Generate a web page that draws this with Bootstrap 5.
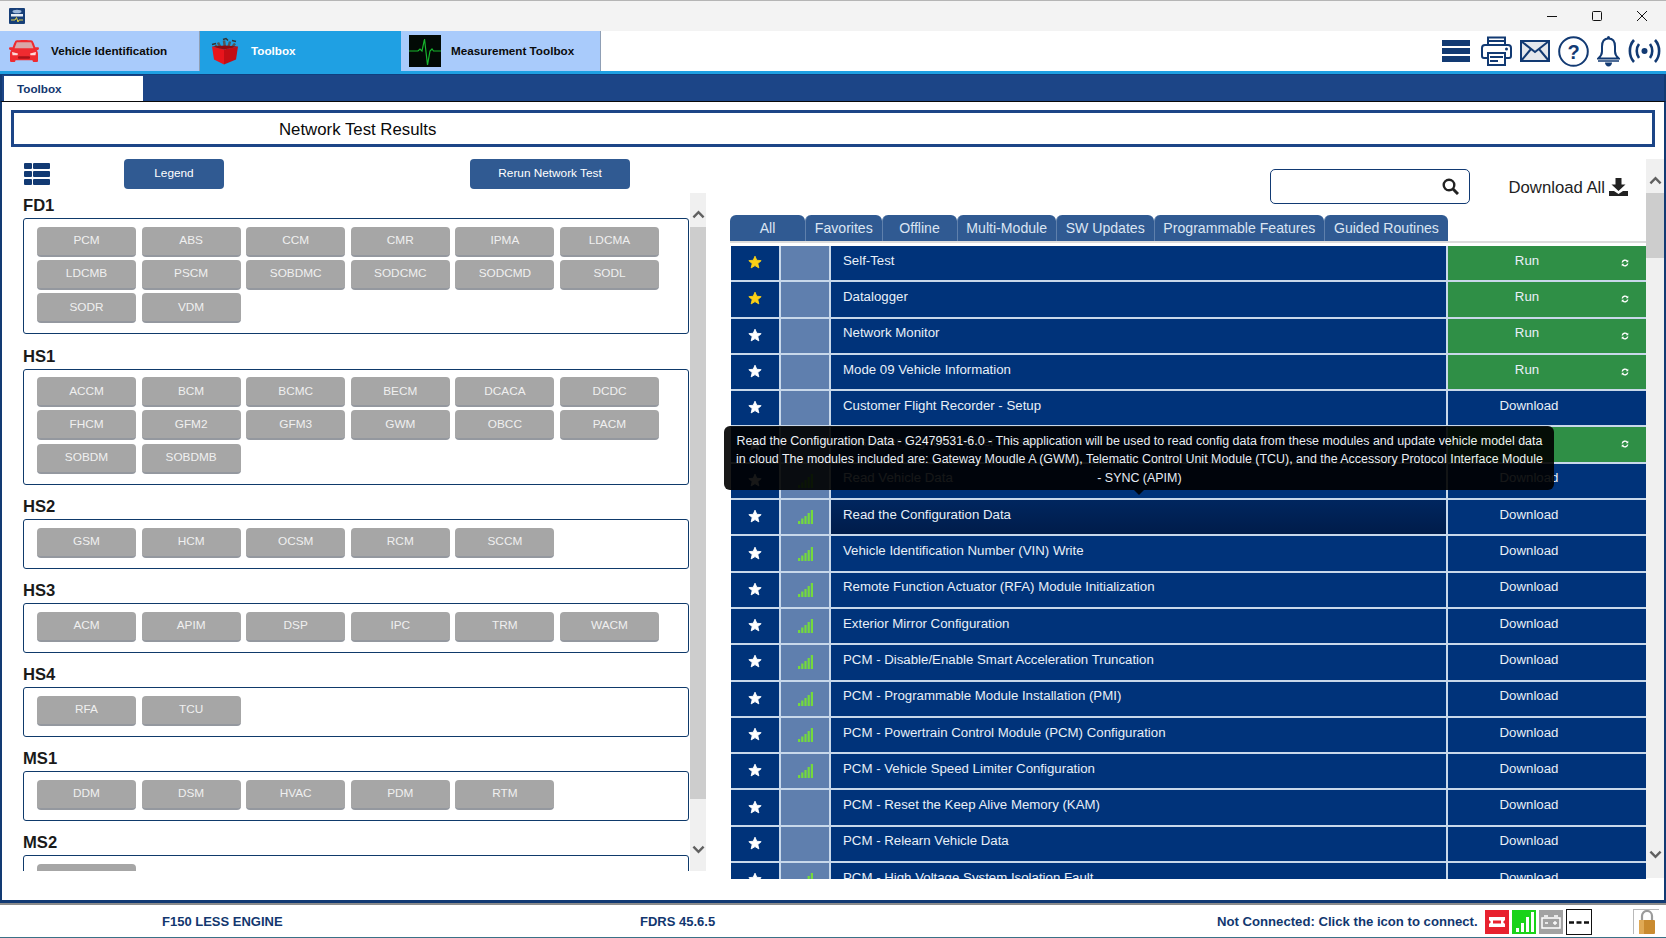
<!DOCTYPE html>
<html lang="en">

<head>
    <meta charset="UTF-8">
    <meta name="viewport" content="width=device-width, initial-scale=1.0">
    <title>FDRS - Toolbox</title>
    <link href="https://cdn.jsdelivr.net/npm/bootstrap@5.3.0/dist/css/bootstrap.min.css" rel="stylesheet">
    <style>
        html, body { height: 100%; }
        body {
            margin: 0;
            overflow: hidden;
            background: #fff;
            font-family: "Liberation Sans", Arial, sans-serif;
            color: #111;
        }
        .fd-app { width: 1666px; height: 938px; }

        /* window title bar */
        .fd-titlebar { height: 31px; background: #f3f3f3; border-top: 1px solid #b5b5b5; }
        .fd-applogo { margin-left: 9px; }
        .fd-winbtns { gap: 35px; padding-right: 19px; }

        /* main ribbon */
        .fd-ribbon { height: 40px; background: #fff; }
        .fd-mtab {
            width: 200px;
            background: #a9cbfb;
            color: #0b0b0b;
            font-size: 11.7px;
            font-weight: 700;
            border-right: 1px solid #8f9fb5;
        }
        .fd-mtab.fd-on { background: #1fa0e3; color: #fff; border-right: 0; width: 201px; }
        .fd-mtab-ico { width: 51px; flex: none; }
        .fd-mtab-car { padding-right: 11px; }
        .fd-mtab.fd-on .fd-mtab-ico { width: 41px; padding-left: 10px; }
        .fd-mtab.fd-on .fd-mtab-lbl { margin-left: 10px; }
        .fd-mtab.fd-third .fd-mtab-ico { width: 50px; padding-left: 8px; }
        .fd-tools { margin-left: auto; padding-right: 5px; }
        .fd-burger { margin-right: 5px; }
        .fd-strip { height: 4px; background: #1fa0e3; border-bottom: 1px solid #0f3f7f; }

        /* sub tab row */
        .fd-subbar {
            height: 27px;
            background: #1c4587;
            border-bottom: 1px solid #0a0a0a;
            padding-left: 2px;
            border-left: 2px solid #123a73;
            border-right: 2px solid #123a73;
        }
        .fd-subtab {
            width: 139px;
            height: 25px;
            margin-top: 1px;
            padding-left: 13px;
            background: #fff;
            color: #12376f;
            font-size: 11.7px;
            font-weight: 700;
            line-height: 25px;
        }

        /* page body */
        .fd-page {
            height: 801px;
            border-left: 2px solid #123a73;
            border-right: 2px solid #123a73;
            border-bottom: 3px solid #123a73;
        }
        .fd-heading {
            height: 37px;
            margin: 8px 9px 0 9px;
            padding-left: 265px;
            border: 3px solid #1c4587;
            font-size: 16.8px;
            line-height: 33px;
            color: #0a0a0a;
        }
        .fd-left { width: 729px; padding: 12px 0 0 21px; flex: none; }
        .fd-actionbtn {
            height: 30px;
            padding: 0 0 2px 0;
            background: #305a92;
            border: 0;
            border-radius: 4px;
            color: #fff;
            font-size: 11.8px;
            line-height: 28px;
        }
        .fd-legend { width: 100px; margin-left: 73px; }
        .fd-rerun { width: 160px; margin-left: 246px; }
        .fd-modwrap { height: 678px; margin-top: 4px; }
        .fd-modlist { width: 666px; overflow: hidden; }
        .fd-bus { font-size: 16.6px; font-weight: 700; line-height: 25px; height: 25px; color: #1a1a1a; }
        .fd-busbox {
            margin-bottom: 9.5px;
            padding: 7.5px 12px 10px 13px;
            border: 1px solid #0f3a6b;
            border-radius: 3px;
            display: grid;
            grid-template-columns: repeat(6, 99px);
            column-gap: 5.6px;
            row-gap: 3.3px;
        }
        .fd-mod {
            height: 30px;
            padding: 0;
            background: #a6a6a6;
            border: 0;
            border-bottom: 2px solid #94989f;
            border-radius: 4px;
            color: #f0f0f0;
            font-size: 11.8px;
            line-height: 27px;
        }

        /* fake scrollbars */
        .fd-sbar { background: #f0f0f0; flex: none; }
        .fd-sbar-a { width: 16px; margin-left: 1px; }
        .fd-sbar-b { width: 18px; }
        .fd-sbar-end { height: 34px; flex: none; }
        .fd-sbar-a .fd-sbar-end:first-child { padding-top: 8px; }
        .fd-sbar-a .fd-sbar-end:last-child { padding-bottom: 10px; }
        .fd-sbar-b .fd-sbar-end:last-child { padding-bottom: 14px; }
        .fd-thumb { background: #cdcdcd; flex: none; }
        .fd-thumb-a { height: 572px; }
        .fd-thumb-b { height: 65px; }

        /* right side */
        .fd-right { width: 933px; flex: none; height: 719px; margin-top: 12px; }
        .fd-rmain { width: 915px; position: relative; }
        .fd-toprow { height: 35px; margin-top: 10px; margin-bottom: 11px; padding-right: 18px; }
        .fd-search {
            width: 200px;
            height: 35px;
            border: 1px solid #123a73;
            border-radius: 5px;
            padding-right: 10px;
        }
        .fd-search input { border: 0; background: transparent; box-shadow: none; }
        .fd-dlall { margin-left: 39px; font-size: 16.7px; color: #222; padding-top: 2px; }
        .fd-tabs { margin-left: -1px; border-bottom: 2px solid #dcdcdc; height: 28px; flex-wrap: nowrap; }
        .fd-tabs .nav-link {
            min-width: 75px;
            height: 26px;
            padding: 0 8.8px;
            background: #305a92;
            color: #dbe5f2;
            font-size: 14.1px;
            line-height: 26px;
            text-align: center;
            border: 0;
            border-left: 1px solid #5f80ac;
            border-radius: 6px 6px 0 0;
        }
        .fd-tabs .nav-item:first-child .nav-link { border-left: 0; }
        .fd-rows {
            height: 633px;
            margin-top: 3px;
            overflow: hidden;
            background: #c8d8ea;
            display: flex;
            flex-direction: column;
            gap: 2px;
        }
        .fd-row { height: 34.3px; flex: none; gap: 2px; color: #e9f0f8; font-size: 13.25px; }
        .fd-cstar { width: 48px; background: #00337a; padding-bottom: 2px; }
        .fd-gold { color: #fcd116; }
        .fd-csig { width: 48px; background: #5f7fae; }
        .fd-cname { width: 615px; background: #00337a; padding: 0 0 5px 12px; }
        .fd-cact { width: 198px; background: #00337a; padding: 0 36px 5px 0; position: relative; }
        .fd-cact.fd-run { background: #2f8f46; padding-right: 40px; }
        .fd-refresh { position: absolute; right: 17px; top: 13px; }
        .fd-row.fd-hover .fd-cname { background: linear-gradient(#00265f, #001c4a); }

        /* tooltip over the rows */
        .fd-tip { position: absolute; top: 260.5px; left: -13px; margin: 0; }
        .fd-tip .tooltip-inner {
            width: 830px;
            max-width: 830px;
            height: 64px;
            padding: 6px 4px;
            font-size: 12.45px;
            line-height: 18.6px;
            background: #000;
            font-family: "Liberation Sans", Arial, sans-serif;
        }
        .fd-tip .tooltip-arrow { position: absolute; left: 415px; }

        /* status bar */
        .fd-status {
            height: 35px;
            padding-top: 1px;
            background: #fff;
            border-top: 2px solid #8b8b8b;
            border-bottom: 1px solid #3a7187;
            color: #12376f;
            font-size: 13px;
            font-weight: 700;
        }
        .fd-veh { margin-left: 162px; width: 478px; }
        .fd-ver { width: 577px; }
        .fd-conn { width: 268px; font-size: 13.15px; white-space: nowrap; }
        .fd-lights { gap: 3px; }
        .fd-lockbox { margin-left: 41px; width: 26px; height: 25px; border: 1px solid #b9b9b9; border-right: 0; border-bottom: 0; }
    </style>
</head>

<body>
    <svg width="0" height="0" class="position-absolute">
        <symbol id="ico-star" viewBox="0 0 24 24"><path d="M12 2l3 7 7.6.7-5.8 5 1.8 7.4L12 18.200l-6.600 3.900 1.800-7.400-5.800-5L9 9z" stroke="currentColor" stroke-width="1.500" stroke-linejoin="round" fill="currentColor"/></symbol>
        <symbol id="ico-bars" viewBox="0 0 15 14" fill="#74da3c"><rect x="0" y="11" width="2.200" height="3"/><rect x="3.200" y="8.500" width="2.200" height="5.500"/><rect x="6.400" y="6" width="2.200" height="8"/><rect x="9.600" y="3" width="2.200" height="11"/><rect x="12.800" y="0" width="2.200" height="14"/></symbol>
        <symbol id="ico-refresh" viewBox="0 0 16 16"><path d="M2.500 7a5.600 5.600 0 0 1 9.800-2.700M13.500 9a5.600 5.600 0 0 1-9.800 2.700" fill="none" stroke="#fff" stroke-width="2.800"/><path d="M14.500 1.500v5h-5zM1.500 14.500v-5h5z" fill="#fff"/></symbol>
        <symbol id="ico-up" viewBox="0 0 14 9"><path d="M1.500 7.500L7 2l5.500 5.500" fill="none" stroke="#606060" stroke-width="2.600"/></symbol>
        <symbol id="ico-down" viewBox="0 0 14 9"><path d="M1.500 1.500L7 7l5.500-5.500" fill="none" stroke="#606060" stroke-width="2.600"/></symbol>
    </svg>

    <div class="fd-app d-flex flex-column">

        <div class="fd-titlebar d-flex align-items-center justify-content-between">
            <svg class="fd-applogo" width="16" height="16" viewBox="0 0 16 16">
                <rect width="16" height="16" rx="1" fill="#173f78"/>
                <ellipse cx="8" cy="3.500" rx="4.500" ry="1.800" fill="#9db8dc"/>
                <rect x="2" y="6" width="12" height="2.500" fill="#e8eef6"/>
                <path d="M2 12h4l1.500-2.500L9 14l1-2h4" fill="none" stroke="#e6d34a" stroke-width="1"/>
            </svg>
            <div class="fd-winbtns d-flex align-items-center">
                <svg width="10" height="10" viewBox="0 0 10 10"><path d="M0 5.500h10" stroke="#111" stroke-width="1"/></svg>
                <svg width="10" height="10" viewBox="0 0 10 10"><rect x=".5" y=".5" width="9" height="9" rx="1" fill="none" stroke="#111" stroke-width="1"/></svg>
                <svg width="10" height="10" viewBox="0 0 10 10"><path d="M0 0l10 10M10 0L0 10" stroke="#111" stroke-width="1"/></svg>
            </div>
        </div>

        <div class="fd-ribbon d-flex">
            <div class="fd-mtab d-flex align-items-center">
                <div class="fd-mtab-ico fd-mtab-car d-flex justify-content-end">
                    <svg width="32" height="24" viewBox="0 0 32 23" preserveAspectRatio="none">
                        <path d="M8 1.500C10 .8 22 .8 24 1.500c1 .4 2.500 4 3.300 6.500H30c1.200 0 1.500 2.200 0 2.500l-1.300.3c.8 1 1.300 2 1.300 3.700v6c0 1-.5 1.500-1.500 1.500h-2.500c-1 0-1.500-.6-1.500-1.700H7.500c0 1.100-.5 1.700-1.500 1.700H3.500C2.500 22 2 21.500 2 20.500v-6c0-1.700.5-2.700 1.300-3.700L2 10.500C.5 10.200.8 8 2 8h2.700C5.500 5.500 7 1.900 8 1.500z" fill="#ef2b30"/>
                        <path d="M8.800 3h14.400l2.300 5.800H6.500z" fill="#d9a7a7"/>
                        <path d="M4 12.500l6 1.500-.5 1.500H4.500zM28 12.500l-6 1.500.5 1.500h5z" fill="#ffd9d9"/>
                        <rect x="10" y="16.500" width="12" height="2.500" rx="1" fill="#a91318"/>
                    </svg>
                </div>
                <span class="fd-mtab-lbl">Vehicle Identification</span>
            </div>
            <div class="fd-mtab fd-on d-flex align-items-center">
                <div class="fd-mtab-ico d-flex">
                    <svg width="32" height="28" viewBox="0 0 31 27">
                        <path d="M8 5l3 6M14 3l1 8M20 4l-2 7M25 6l-4 5M5 8l5 3" stroke="#555" stroke-width="2.500"/>
                        <path d="M13 2l3-1 2 2M22 3l4 1M2 7l4-1" stroke="#333" stroke-width="1.500" fill="none"/>
                        <path d="M15 9l3 5-3 1z" fill="#f3c623"/>
                        <path d="M2 9l12 3v15L4 22z" fill="#e8141c"/>
                        <path d="M14 12l14-3-2 13-12 5z" fill="#c30d14"/>
                        <path d="M2 9l12 3 14-3-13-1z" fill="#8e0a10"/>
                    </svg>
                </div>
                <span class="fd-mtab-lbl">Toolbox</span>
            </div>
            <div class="fd-mtab fd-third d-flex align-items-center">
                <div class="fd-mtab-ico d-flex">
                    <svg width="32" height="32" viewBox="0 0 32 32">
                        <rect width="32" height="32" fill="#020a05"/>
                        <path d="M0 16h9l2-2 2 2 2.500-12 3 26 2.500-14 2-2 1.500 2H32" fill="none" stroke="#17b52d" stroke-width="1.200"/>
                    </svg>
                </div>
                <span class="fd-mtab-lbl">Measurement Toolbox</span>
            </div>

            <div class="fd-tools d-flex align-items-center">
                <svg class="fd-burger" width="30" height="22" viewBox="0 0 30 22" fill="#123a73"><rect width="28" height="6"/><rect y="8" width="28" height="6"/><rect y="16" width="28" height="6"/></svg>
                <svg class="ms-1 me-2" width="31" height="30" viewBox="0 0 31 30">
                    <path d="M7 9V1.500h17V9" fill="none" stroke="#123a73" stroke-width="2"/>
                    <path d="M6 22H3c-1.200 0-2-.8-2-2v-8c0-1.600 1.200-3 3-3h23c1.800 0 3 1.400 3 3v8c0 1.200-.8 2-2 2h-3" fill="none" stroke="#123a73" stroke-width="2"/>
                    <rect x="7" y="17" width="17" height="12" fill="#fff" stroke="#123a73" stroke-width="2"/>
                    <path d="M7 5h17M9 21h13M9 25h8" stroke="#123a73" stroke-width="2"/>
                    <circle cx="25.500" cy="13" r="1.500" fill="#123a73"/>
                </svg>
                <svg class="me-2" width="30" height="22" viewBox="0 0 30 22">
                    <rect x="1" y="1" width="28" height="20" fill="#e4e7ec" stroke="#123a73" stroke-width="2"/>
                    <path d="M1 1l14 11L29 1M1 21l10-12M29 21L19 9" fill="none" stroke="#123a73" stroke-width="2"/>
                </svg>
                <svg class="me-2" width="31" height="31" viewBox="0 0 31 31">
                    <circle cx="15.500" cy="15.500" r="14.300" fill="none" stroke="#123a73" stroke-width="2"/>
                    <text x="15.500" y="22.500" text-anchor="middle" font-family="Liberation Sans" font-weight="700" font-size="20" fill="#123a73">?</text>
                </svg>
                <svg class="me-2" width="23" height="32" viewBox="0 0 23 32">
                    <path d="M11.500 3.500c-4.500 0-6.500 3.500-6.500 8v5c0 3-2 5.500-3.800 7h20.600c-1.800-1.500-3.800-4-3.800-7v-5c0-4.500-2-8-6.500-8z" fill="none" stroke="#123a73" stroke-width="2"/>
                    <circle cx="11.500" cy="2.500" r="1.500" fill="#123a73"/>
                    <path d="M1 26h21" stroke="#123a73" stroke-width="1.500"/>
                    <path d="M8 27.500h7c0 2-1.500 4-3.500 4s-3.500-2-3.500-4z" fill="#123a73"/>
                </svg>
                <svg width="33" height="26" viewBox="0 0 33 26" fill="none" stroke="#123a73" stroke-width="2.600">
                    <path d="M6 2C.5 8 .5 18 6 24M11 6c-3 4-3 10 0 14M27 2c5.500 6 5.500 16 0 22M22 6c3 4 3 10 0 14"/>
                    <circle cx="16.500" cy="13" r="3" fill="#123a73" stroke="none"/>
                </svg>
            </div>
        </div>
        <div class="fd-strip"></div>

        <div class="fd-subbar">
            <div class="fd-subtab">Toolbox</div>
        </div>

        <div class="fd-page">
            <div class="fd-heading">Network Test Results</div>

            <div class="d-flex">
                <!-- modules -->
                <div class="fd-left">
                    <div class="d-flex align-items-center">
                        <svg width="28" height="24" viewBox="0 0 28 24" fill="#123a73" class="flex-shrink-0">
                            <rect x="1" y="1" width="8" height="6" rx="1"/><rect x="10" y="1" width="17" height="6" rx="1"/>
                            <rect x="1" y="9" width="8" height="6" rx="1"/><rect x="10" y="9" width="17" height="6" rx="1"/>
                            <rect x="1" y="17" width="8" height="6" rx="1"/><rect x="10" y="17" width="17" height="6" rx="1"/>
                        </svg>
                        <button type="button" class="btn fd-actionbtn fd-legend">Legend</button>
                        <button type="button" class="btn fd-actionbtn fd-rerun">Rerun Network Test</button>
                    </div>
                    <div class="fd-modwrap d-flex">
                        <div class="fd-modlist">
                            <div class="fd-bus">FD1</div>
                            <div class="fd-busbox">
                                <button type="button" class="btn fd-mod">PCM</button>
                                <button type="button" class="btn fd-mod">ABS</button>
                                <button type="button" class="btn fd-mod">CCM</button>
                                <button type="button" class="btn fd-mod">CMR</button>
                                <button type="button" class="btn fd-mod">IPMA</button>
                                <button type="button" class="btn fd-mod">LDCMA</button>
                                <button type="button" class="btn fd-mod">LDCMB</button>
                                <button type="button" class="btn fd-mod">PSCM</button>
                                <button type="button" class="btn fd-mod">SOBDMC</button>
                                <button type="button" class="btn fd-mod">SODCMC</button>
                                <button type="button" class="btn fd-mod">SODCMD</button>
                                <button type="button" class="btn fd-mod">SODL</button>
                                <button type="button" class="btn fd-mod">SODR</button>
                                <button type="button" class="btn fd-mod">VDM</button>
                            </div>
                            <div class="fd-bus">HS1</div>
                            <div class="fd-busbox">
                                <button type="button" class="btn fd-mod">ACCM</button>
                                <button type="button" class="btn fd-mod">BCM</button>
                                <button type="button" class="btn fd-mod">BCMC</button>
                                <button type="button" class="btn fd-mod">BECM</button>
                                <button type="button" class="btn fd-mod">DCACA</button>
                                <button type="button" class="btn fd-mod">DCDC</button>
                                <button type="button" class="btn fd-mod">FHCM</button>
                                <button type="button" class="btn fd-mod">GFM2</button>
                                <button type="button" class="btn fd-mod">GFM3</button>
                                <button type="button" class="btn fd-mod">GWM</button>
                                <button type="button" class="btn fd-mod">OBCC</button>
                                <button type="button" class="btn fd-mod">PACM</button>
                                <button type="button" class="btn fd-mod">SOBDM</button>
                                <button type="button" class="btn fd-mod">SOBDMB</button>
                            </div>
                            <div class="fd-bus">HS2</div>
                            <div class="fd-busbox">
                                <button type="button" class="btn fd-mod">GSM</button>
                                <button type="button" class="btn fd-mod">HCM</button>
                                <button type="button" class="btn fd-mod">OCSM</button>
                                <button type="button" class="btn fd-mod">RCM</button>
                                <button type="button" class="btn fd-mod">SCCM</button>
                            </div>
                            <div class="fd-bus">HS3</div>
                            <div class="fd-busbox">
                                <button type="button" class="btn fd-mod">ACM</button>
                                <button type="button" class="btn fd-mod">APIM</button>
                                <button type="button" class="btn fd-mod">DSP</button>
                                <button type="button" class="btn fd-mod">IPC</button>
                                <button type="button" class="btn fd-mod">TRM</button>
                                <button type="button" class="btn fd-mod">WACM</button>
                            </div>
                            <div class="fd-bus">HS4</div>
                            <div class="fd-busbox">
                                <button type="button" class="btn fd-mod">RFA</button>
                                <button type="button" class="btn fd-mod">TCU</button>
                            </div>
                            <div class="fd-bus">MS1</div>
                            <div class="fd-busbox">
                                <button type="button" class="btn fd-mod">DDM</button>
                                <button type="button" class="btn fd-mod">DSM</button>
                                <button type="button" class="btn fd-mod">HVAC</button>
                                <button type="button" class="btn fd-mod">PDM</button>
                                <button type="button" class="btn fd-mod">RTM</button>
                            </div>
                            <div class="fd-bus">MS2</div>
                            <div class="fd-busbox">
                                <button type="button" class="btn fd-mod"></button>
                            </div>
                        </div>
                        <div class="fd-sbar fd-sbar-a d-flex flex-column">
                            <div class="fd-sbar-end d-flex align-items-center justify-content-center"><svg width="13" height="9"><use href="#ico-up"/></svg></div>
                            <div class="fd-thumb fd-thumb-a"></div>
                            <div class="fd-sbar-end mt-auto d-flex align-items-center justify-content-center"><svg width="13" height="9"><use href="#ico-down"/></svg></div>
                        </div>
                    </div>
                </div>

                <!-- applications -->
                <div class="fd-right d-flex">
                    <div class="fd-rmain">
                        <div class="fd-toprow d-flex justify-content-end align-items-center">
                            <div class="fd-search d-flex align-items-center">
                                <input type="text" class="form-control" aria-label="Search">
                                <svg width="17" height="17" viewBox="0 0 17 17" class="flex-shrink-0"><circle cx="7" cy="7" r="5.300" fill="none" stroke="#222" stroke-width="2.400"/><path d="M11 11l5 5" stroke="#222" stroke-width="3"/></svg>
                            </div>
                            <div class="fd-dlall d-flex align-items-center">
                                Download All
                                <svg class="ms-1" width="19" height="18" viewBox="0 0 19 18" fill="#222"><path d="M6.500 0h6v6.500h4L9.500 13 2.500 6.500h4z"/><path d="M0 13h5l4.500 3 4.500-3h5v5H0z"/></svg>
                            </div>
                        </div>
                        <ul class="nav fd-tabs">
                            <li class="nav-item"><a class="nav-link" href="#">All</a></li>
                            <li class="nav-item"><a class="nav-link" href="#">Favorites</a></li>
                            <li class="nav-item"><a class="nav-link" href="#">Offline</a></li>
                            <li class="nav-item"><a class="nav-link" href="#">Multi-Module</a></li>
                            <li class="nav-item"><a class="nav-link" href="#">SW Updates</a></li>
                            <li class="nav-item"><a class="nav-link" href="#">Programmable Features</a></li>
                            <li class="nav-item"><a class="nav-link" href="#">Guided Routines</a></li>
                        </ul>
                        <div class="fd-rows">
                            <div class="fd-row d-flex">
                                <div class="fd-cstar fd-gold d-flex align-items-center justify-content-center"><svg width="14" height="14"><use href="#ico-star"/></svg></div>
                                <div class="fd-csig"></div>
                                <div class="fd-cname d-flex align-items-center">Self-Test</div>
                                <div class="fd-cact fd-run d-flex align-items-center justify-content-center">Run<svg class="fd-refresh" width="8" height="8"><use href="#ico-refresh"/></svg></div>
                            </div>
                            <div class="fd-row d-flex">
                                <div class="fd-cstar fd-gold d-flex align-items-center justify-content-center"><svg width="14" height="14"><use href="#ico-star"/></svg></div>
                                <div class="fd-csig"></div>
                                <div class="fd-cname d-flex align-items-center">Datalogger</div>
                                <div class="fd-cact fd-run d-flex align-items-center justify-content-center">Run<svg class="fd-refresh" width="8" height="8"><use href="#ico-refresh"/></svg></div>
                            </div>
                            <div class="fd-row d-flex">
                                <div class="fd-cstar d-flex align-items-center justify-content-center text-white"><svg width="14" height="14"><use href="#ico-star"/></svg></div>
                                <div class="fd-csig"></div>
                                <div class="fd-cname d-flex align-items-center">Network Monitor</div>
                                <div class="fd-cact fd-run d-flex align-items-center justify-content-center">Run<svg class="fd-refresh" width="8" height="8"><use href="#ico-refresh"/></svg></div>
                            </div>
                            <div class="fd-row d-flex">
                                <div class="fd-cstar d-flex align-items-center justify-content-center text-white"><svg width="14" height="14"><use href="#ico-star"/></svg></div>
                                <div class="fd-csig"></div>
                                <div class="fd-cname d-flex align-items-center">Mode 09 Vehicle Information</div>
                                <div class="fd-cact fd-run d-flex align-items-center justify-content-center">Run<svg class="fd-refresh" width="8" height="8"><use href="#ico-refresh"/></svg></div>
                            </div>
                            <div class="fd-row d-flex">
                                <div class="fd-cstar d-flex align-items-center justify-content-center text-white"><svg width="14" height="14"><use href="#ico-star"/></svg></div>
                                <div class="fd-csig"></div>
                                <div class="fd-cname d-flex align-items-center">Customer Flight Recorder - Setup</div>
                                <div class="fd-cact d-flex align-items-center justify-content-center">Download</div>
                            </div>
                            <div class="fd-row d-flex">
                                <div class="fd-cstar d-flex align-items-center justify-content-center text-white"><svg width="14" height="14"><use href="#ico-star"/></svg></div>
                                <div class="fd-csig"></div>
                                <div class="fd-cname d-flex align-items-center">Customer Flight Recorder - Read</div>
                                <div class="fd-cact fd-run d-flex align-items-center justify-content-center">Run<svg class="fd-refresh" width="8" height="8"><use href="#ico-refresh"/></svg></div>
                            </div>
                            <div class="fd-row d-flex">
                                <div class="fd-cstar d-flex align-items-center justify-content-center text-white"><svg width="14" height="14"><use href="#ico-star"/></svg></div>
                                <div class="fd-csig d-flex align-items-center justify-content-center"><svg width="15" height="14"><use href="#ico-bars"/></svg></div>
                                <div class="fd-cname d-flex align-items-center">Read Vehicle Data</div>
                                <div class="fd-cact d-flex align-items-center justify-content-center">Download</div>
                            </div>
                            <div class="fd-row fd-hover d-flex">
                                <div class="fd-cstar d-flex align-items-center justify-content-center text-white"><svg width="14" height="14"><use href="#ico-star"/></svg></div>
                                <div class="fd-csig d-flex align-items-center justify-content-center"><svg width="15" height="14"><use href="#ico-bars"/></svg></div>
                                <div class="fd-cname d-flex align-items-center">Read the Configuration Data</div>
                                <div class="fd-cact d-flex align-items-center justify-content-center">Download</div>
                            </div>
                            <div class="fd-row d-flex">
                                <div class="fd-cstar d-flex align-items-center justify-content-center text-white"><svg width="14" height="14"><use href="#ico-star"/></svg></div>
                                <div class="fd-csig d-flex align-items-center justify-content-center"><svg width="15" height="14"><use href="#ico-bars"/></svg></div>
                                <div class="fd-cname d-flex align-items-center">Vehicle Identification Number (VIN) Write</div>
                                <div class="fd-cact d-flex align-items-center justify-content-center">Download</div>
                            </div>
                            <div class="fd-row d-flex">
                                <div class="fd-cstar d-flex align-items-center justify-content-center text-white"><svg width="14" height="14"><use href="#ico-star"/></svg></div>
                                <div class="fd-csig d-flex align-items-center justify-content-center"><svg width="15" height="14"><use href="#ico-bars"/></svg></div>
                                <div class="fd-cname d-flex align-items-center">Remote Function Actuator (RFA) Module Initialization</div>
                                <div class="fd-cact d-flex align-items-center justify-content-center">Download</div>
                            </div>
                            <div class="fd-row d-flex">
                                <div class="fd-cstar d-flex align-items-center justify-content-center text-white"><svg width="14" height="14"><use href="#ico-star"/></svg></div>
                                <div class="fd-csig d-flex align-items-center justify-content-center"><svg width="15" height="14"><use href="#ico-bars"/></svg></div>
                                <div class="fd-cname d-flex align-items-center">Exterior Mirror Configuration</div>
                                <div class="fd-cact d-flex align-items-center justify-content-center">Download</div>
                            </div>
                            <div class="fd-row d-flex">
                                <div class="fd-cstar d-flex align-items-center justify-content-center text-white"><svg width="14" height="14"><use href="#ico-star"/></svg></div>
                                <div class="fd-csig d-flex align-items-center justify-content-center"><svg width="15" height="14"><use href="#ico-bars"/></svg></div>
                                <div class="fd-cname d-flex align-items-center">PCM - Disable/Enable Smart Acceleration Truncation</div>
                                <div class="fd-cact d-flex align-items-center justify-content-center">Download</div>
                            </div>
                            <div class="fd-row d-flex">
                                <div class="fd-cstar d-flex align-items-center justify-content-center text-white"><svg width="14" height="14"><use href="#ico-star"/></svg></div>
                                <div class="fd-csig d-flex align-items-center justify-content-center"><svg width="15" height="14"><use href="#ico-bars"/></svg></div>
                                <div class="fd-cname d-flex align-items-center">PCM - Programmable Module Installation (PMI)</div>
                                <div class="fd-cact d-flex align-items-center justify-content-center">Download</div>
                            </div>
                            <div class="fd-row d-flex">
                                <div class="fd-cstar d-flex align-items-center justify-content-center text-white"><svg width="14" height="14"><use href="#ico-star"/></svg></div>
                                <div class="fd-csig d-flex align-items-center justify-content-center"><svg width="15" height="14"><use href="#ico-bars"/></svg></div>
                                <div class="fd-cname d-flex align-items-center">PCM - Powertrain Control Module (PCM) Configuration</div>
                                <div class="fd-cact d-flex align-items-center justify-content-center">Download</div>
                            </div>
                            <div class="fd-row d-flex">
                                <div class="fd-cstar d-flex align-items-center justify-content-center text-white"><svg width="14" height="14"><use href="#ico-star"/></svg></div>
                                <div class="fd-csig d-flex align-items-center justify-content-center"><svg width="15" height="14"><use href="#ico-bars"/></svg></div>
                                <div class="fd-cname d-flex align-items-center">PCM - Vehicle Speed Limiter Configuration</div>
                                <div class="fd-cact d-flex align-items-center justify-content-center">Download</div>
                            </div>
                            <div class="fd-row d-flex">
                                <div class="fd-cstar d-flex align-items-center justify-content-center text-white"><svg width="14" height="14"><use href="#ico-star"/></svg></div>
                                <div class="fd-csig"></div>
                                <div class="fd-cname d-flex align-items-center">PCM - Reset the Keep Alive Memory (KAM)</div>
                                <div class="fd-cact d-flex align-items-center justify-content-center">Download</div>
                            </div>
                            <div class="fd-row d-flex">
                                <div class="fd-cstar d-flex align-items-center justify-content-center text-white"><svg width="14" height="14"><use href="#ico-star"/></svg></div>
                                <div class="fd-csig"></div>
                                <div class="fd-cname d-flex align-items-center">PCM - Relearn Vehicle Data</div>
                                <div class="fd-cact d-flex align-items-center justify-content-center">Download</div>
                            </div>
                            <div class="fd-row d-flex">
                                <div class="fd-cstar d-flex align-items-center justify-content-center text-white"><svg width="14" height="14"><use href="#ico-star"/></svg></div>
                                <div class="fd-csig d-flex align-items-center justify-content-center"><svg width="15" height="14"><use href="#ico-bars"/></svg></div>
                                <div class="fd-cname d-flex align-items-center">PCM - High Voltage System Isolation Fault</div>
                                <div class="fd-cact d-flex align-items-center justify-content-center">Download</div>
                            </div>
                        </div>

                        <div class="tooltip bs-tooltip-top show fd-tip" role="tooltip">
                            <div class="tooltip-arrow"></div>
                            <div class="tooltip-inner">Read the Configuration Data - G2479531-6.0 - This application will be used to read config data from these modules and update vehicle model data<br>in cloud The modules included are: Gateway Moudle A (GWM), Telematic Control Unit Module (TCU), and the Accessory Protocol Interface Module<br>- SYNC (APIM)</div>
                        </div>
                    </div>
                    <div class="fd-sbar fd-sbar-b d-flex flex-column">
                        <div class="fd-sbar-end d-flex align-items-center justify-content-center pt-2"><svg width="13" height="9"><use href="#ico-up"/></svg></div>
                        <div class="fd-thumb fd-thumb-b"></div>
                        <div class="fd-sbar-end mt-auto d-flex align-items-center justify-content-center"><svg width="13" height="9"><use href="#ico-down"/></svg></div>
                    </div>
                </div>
            </div>
        </div>

        <div class="fd-status d-flex align-items-center">
            <div class="fd-veh">F150 LESS ENGINE</div>
            <div class="fd-ver">FDRS 45.6.5</div>
            <div class="fd-conn">Not Connected: Click the icon to connect.</div>
            <div class="fd-lights d-flex align-items-center">
                <svg width="24" height="24" viewBox="0 0 24 24">
                    <rect width="24" height="24" fill="#e8212e"/>
                    <path d="M4 7h16v3l-2 2 2 2v3H4v-3l2-2-2-2z" fill="#fff"/>
                    <path d="M8 10.500h8v3H8z" fill="#e8212e"/>
                </svg>
                <svg width="24" height="24" viewBox="0 0 24 24" fill="#fff">
                    <rect width="24" height="24" fill="#19d319"/>
                    <rect x="4" y="18" width="3" height="4"/><rect x="9" y="13" width="3" height="9"/><rect x="14" y="7" width="3" height="15"/><rect x="19" y="2" width="3" height="20"/>
                </svg>
                <svg width="24" height="24" viewBox="0 0 24 24">
                    <rect width="24" height="24" fill="#a2a2a2"/>
                    <path d="M3 8h18v10H3z" fill="none" stroke="#fff" stroke-width="1.500"/>
                    <path d="M5 6h4M15 6h4M6 13h3M14 13h4M16 11v4" stroke="#fff" stroke-width="1.300"/>
                </svg>
                <svg width="26" height="26" viewBox="0 0 26 26">
                    <rect x=".5" y=".5" width="25" height="25" fill="#fff" stroke="#111" stroke-width="1"/>
                    <path d="M3 13.500h5M10.500 13.500h5M18 13.500h5" stroke="#111" stroke-width="2.500"/>
                </svg>
            </div>
            <div class="fd-lockbox d-flex justify-content-center">
                <svg width="18" height="24" viewBox="0 0 18 24">
                    <path d="M4 11V6a5 5 0 0 1 10 0v5" fill="none" stroke="#9b9b9b" stroke-width="2.200"/>
                    <rect x="1" y="10" width="16" height="14" rx="1" fill="#c98a2f"/>
                    <rect x="1" y="10" width="5" height="14" fill="#e0a955"/>
                </svg>
            </div>
        </div>
    </div>

    <script src="https://cdn.jsdelivr.net/npm/bootstrap@5.3.0/dist/js/bootstrap.bundle.min.js"></script>
</body>

</html>
